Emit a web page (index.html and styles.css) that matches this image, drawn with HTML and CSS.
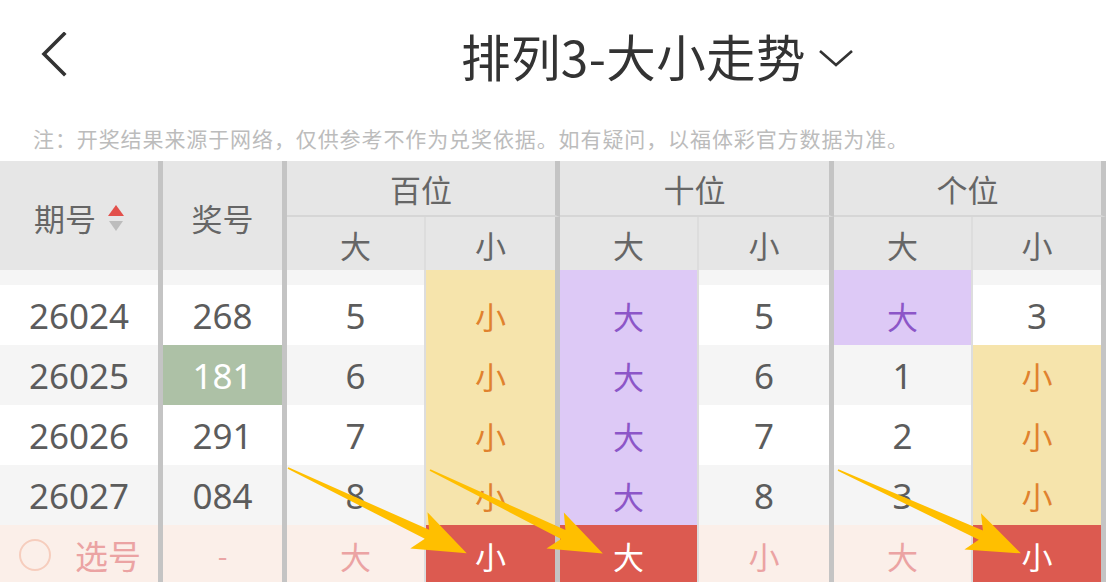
FILE: index.html
```html
<!DOCTYPE html>
<html lang="zh">
<head>
<meta charset="utf-8">
<title>排列3-大小走势</title>
<link rel="stylesheet" href="styles.css">
</head>
<body>
<div class="page">
  <header class="topbar">
    <svg class="back" width="30" height="46" viewBox="0 0 30 46"><polyline points="23,2 3,22 23,42" fill="none" stroke="#333" stroke-width="3.6" stroke-linecap="square" stroke-linejoin="miter"/></svg>
    <div class="title">排列3-大小走势<svg class="caret" width="36" height="20" viewBox="0 0 36 20"><polyline points="2,3 18,17 34,3" fill="none" stroke="#333" stroke-width="2.6"/></svg></div>
  </header>
  <p class="notice">注：开奖结果来源于网络，仅供参考不作为兑奖依据。如有疑问，以福体彩官方数据为准。</p>

  <div class="table">
    <div class="thead">
      <div class="hc span2 thick">期号<span class="sort"><i class="up"></i><i class="down"></i></span></div>
      <div class="hc span2 thick">奖号</div>
      <div class="hc group thick">百位</div>
      <div class="hc group thick">十位</div>
      <div class="hc group thick">个位</div>
      <div class="hc sub thin">大</div>
      <div class="hc sub thick">小</div>
      <div class="hc sub thin">大</div>
      <div class="hc sub thick">小</div>
      <div class="hc sub thin">大</div>
      <div class="hc sub thick">小</div>
    </div>
    <div class="tbody">
      <div class="peek">
        <div class="row alt partial">
          <div class="c thick">26023</div><div class="c thick">482</div>
          <div class="c thin">4</div><div class="c thick s">小</div>
          <div class="c thin b">大</div><div class="c thick">4</div>
          <div class="c thin b">大</div><div class="c thick">2</div>
        </div>
      </div>
      <div class="row">
        <div class="c thick">26024</div><div class="c thick">268</div>
        <div class="c thin">5</div><div class="c thick s">小</div>
        <div class="c thin b">大</div><div class="c thick">5</div>
        <div class="c thin b">大</div><div class="c thick">3</div>
      </div>
      <div class="row alt">
        <div class="c thick">26025</div><div class="c thick g">181</div>
        <div class="c thin">6</div><div class="c thick s">小</div>
        <div class="c thin b">大</div><div class="c thick">6</div>
        <div class="c thin">1</div><div class="c thick s">小</div>
      </div>
      <div class="row">
        <div class="c thick">26026</div><div class="c thick">291</div>
        <div class="c thin">7</div><div class="c thick s">小</div>
        <div class="c thin b">大</div><div class="c thick">7</div>
        <div class="c thin">2</div><div class="c thick s">小</div>
      </div>
      <div class="row alt">
        <div class="c thick">26027</div><div class="c thick">084</div>
        <div class="c thin">8</div><div class="c thick s">小</div>
        <div class="c thin b">大</div><div class="c thick">8</div>
        <div class="c thin">3</div><div class="c thick s">小</div>
      </div>
      <div class="row pick">
        <div class="c thick"><span class="radio"></span><span class="pick-label">选号</span></div><div class="c thick dash">-</div>
        <div class="c thin">大</div><div class="c thick on">小</div>
        <div class="c thin on">大</div><div class="c thick">小</div>
        <div class="c thin">大</div><div class="c thick on">小</div>
      </div>
    </div>
  </div>

  <svg class="arrows" width="1106" height="582" viewBox="0 0 1106 582">
    <g fill="#ffbf00">
      <polygon transform="translate(288 468) rotate(25.5)" points="0,-0.8 154,-5 145,-20 198,0 145,20 154,5 0,0.8"/>
      <polygon transform="translate(430 470) rotate(25.8)" points="0,-0.8 148,-5 139,-20 192,0 139,20 148,5 0,0.8"/>
      <polygon transform="translate(838 470) rotate(24.5)" points="0,-0.8 157,-5 148,-20 201,0 148,20 157,5 0,0.8"/>
    </g>
  </svg>
</div>
</body>
</html>
```

FILE: styles.css
```css
* { box-sizing: border-box; }
html, body { margin: 0; padding: 0; }
body {
  background: #fff;
  font-family: "Noto Sans", "Noto Sans CJK SC", sans-serif;
  color: #333;
}
.page {
  position: relative;
  width: 1106px;
  height: 582px;
  overflow: hidden;
}
.topbar {
  display: flex;
  align-items: center;
  height: 112px;
  padding-left: 41px;
}
.back { display: block; margin-top: -2px; }
.title {
  display: flex;
  align-items: center;
  margin-left: 390px;
  font-family: "Noto Sans CJK SC", sans-serif;
  font-size: 49.5px;
  color: #333;
  letter-spacing: 0.4px;
  margin-top: -2px;
}
.caret { margin-left: 12px; margin-top: 6px; }
.notice {
  margin: 0;
  padding-left: 33px;
  height: 49px;
  padding-top: 14px;
  font-family: "Noto Sans CJK SC", sans-serif;
  font-size: 21px;
  line-height: 24px;
  color: #bcbcbc;
  letter-spacing: 0.9px;
}
.table { width: 1106px; }
.thead, .row {
  display: grid;
  grid-template-columns: 163px 124px 139px 134px 139px 135px 139px 133px;
}
.thead {
  grid-template-rows: 56px 53px;
  background: #e6e6e6;
}
.hc {
  display: flex;
  align-items: center;
  justify-content: center;
  font-family: "Noto Sans CJK SC", sans-serif;
  font-size: 31px;
  color: #666;
}
.span2 { grid-row: span 2; padding-top: 4px; }
.group { grid-column: span 2; border-bottom: 2px solid #d6d6d6; }
.sub { padding-top: 2px; }
.thick { border-right: 5px solid #c4c4c4; }
.thin { border-right: 2px solid #dddddd; }
.sort {
  display: flex;
  flex-direction: column;
  gap: 5px;
  margin-left: 12px;
}
.sort i { display: block; width: 0; height: 0; border-left: 8px solid transparent; border-right: 8px solid transparent; }
.sort .up { border-bottom: 11px solid #e2504b; }
.sort .down { border-top: 10px solid #bdbdbd; margin-left: 1px; border-left-width: 7px; border-right-width: 7px; }

.tbody { overflow: hidden; }
.peek { height: 15px; overflow: hidden; }
.row { height: 60px; background: #fff; }
.row.alt { background: #f5f5f5; }
.row.partial { margin-top: -45px; }
.row.partial .c { padding-bottom: 6px; }
.c {
  display: flex;
  align-items: center;
  justify-content: center;
  font-size: 35px;
  color: #5c5c5c;
  font-family: "Noto Sans", "Noto Sans CJK SC", sans-serif;
}
.c.s { background: #f6e4ac; color: #e0822e; font-size: 31px; font-family: "Noto Sans CJK SC", sans-serif; }
.c.b { background: #ddc9f6; color: #8c56c8; font-size: 31px; font-family: "Noto Sans CJK SC", sans-serif; }
.c.g { background: #adc1a6; color: #fff; }
.row.pick { background: #fbefe9; }
.row.pick .c { color: #eba3a3; font-size: 31px; font-family: "Noto Sans CJK SC", sans-serif; }
.row.pick .c.on { background: #dc5a50; color: #fff; }
.row.pick .dash { font-size: 28px; color: #eaa5a5; }
.row.pick .pick-label { font-size: 33px; }
.radio {
  width: 32px;
  height: 32px;
  border: 2px solid #f6cdbd;
  border-radius: 50%;
  margin-right: 24px;
  margin-left: 2px;
}
.arrows {
  position: absolute;
  left: 0;
  top: 0;
  pointer-events: none;
}
```
